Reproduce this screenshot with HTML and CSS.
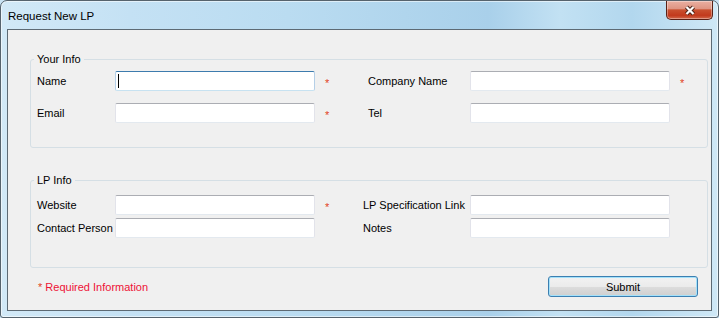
FILE: index.html
```html
<!DOCTYPE html>
<html lang="en">
<head>
    <meta charset="UTF-8">
    <title>Request New LP</title>
    <link rel="stylesheet" href="styles.css">
</head>
<body>
    <div class="window">
        <div class="titlebar">
            <span class="title">Request New LP</span>
            <button class="close" type="button">
                <svg width="14" height="11" viewBox="0 0 14 11">
                    <path d="M3.5 2 L10.5 9 M10.5 2 L3.5 9" stroke="#4a2419" stroke-width="4.2" fill="none"/>
                    <path d="M3.5 2 L10.5 9 M10.5 2 L3.5 9" stroke="#ffffff" stroke-width="2.2" fill="none"/>
                </svg>
            </button>
        </div>
        <form class="client">
            <fieldset class="group your-info">
                <legend>Your Info</legend>
                <div class="grid">
                    <label>Name</label>
                    <input type="text" class="focused">
                    <span class="req">*</span>
                    <label>Company Name</label>
                    <input type="text">
                    <span class="req">*</span>

                    <label>Email</label>
                    <input type="text">
                    <span class="req">*</span>
                    <label>Tel</label>
                    <input type="text">
                    <span></span>
                </div>
            </fieldset>

            <fieldset class="group lp-info">
                <legend>LP Info</legend>
                <div class="grid">
                    <label>Website</label>
                    <input type="text">
                    <span class="req">*</span>
                    <label>LP Specification Link</label>
                    <input type="text">
                    <span></span>

                    <label>Contact Person</label>
                    <input type="text">
                    <span></span>
                    <label>Notes</label>
                    <input type="text">
                    <span></span>
                </div>
            </fieldset>

            <div class="footer">
                <span class="note"><span class="note-star">*</span> Required Information</span>
                <button class="submit" type="button">Submit</button>
            </div>
        </form>
    </div>
</body>
</html>
```

FILE: styles.css
```css
body {
    margin: 0;
    font-family: "Liberation Sans", Arial, sans-serif;
    font-size: 11px;
    color: #000;
    background: #c9e3f4;
}

.window {
    box-sizing: border-box;
    width: 719px;
    height: 318px;
    display: flex;
    flex-direction: column;
    padding: 0 6px 6px 6px;
    border: 1px solid #56636d;
    border-radius: 7px 7px 3px 3px;
    background: linear-gradient(to right, #d2e9f7 0%, #c4e1f4 18%, #badcf1 40%, #a9d0ea 68%, #c2e1f3 78%, #b2d7ee 88%, #cfe8f6 100%);
    box-shadow: inset 0 0 0 1px rgba(255, 255, 255, 0.55);
}

.titlebar {
    height: 28px;
    display: flex;
    justify-content: space-between;
    align-items: flex-start;
    flex-shrink: 0;
}

.title {
    padding: 8px 0 0 1px;
    font-size: 11.5px;
    line-height: 14px;
    color: #000;
}

.close {
    width: 47px;
    height: 19px;
    margin-right: -1px;
    padding: 0;
    display: flex;
    align-items: center;
    justify-content: center;
    border: 1px solid #5a2116;
    border-top: none;
    border-radius: 0 0 5px 5px;
    background: linear-gradient(#eab0a2 0%, #df9583 42%, #c9502f 50%, #c23a1d 80%, #d2694b 100%);
    box-shadow: inset 0 0 0 1px rgba(255, 255, 255, 0.35);
}

.client {
    flex: 1;
    margin: 0;
    display: flex;
    flex-direction: column;
    background: #f0f0f0;
    border: 1px solid #5d6a74;
}

.group {
    min-width: 0;
    margin: 22px 3px 0 22px;
    padding: 5px 0 24px 6px;
    border: 1px solid #d5dfe5;
    border-radius: 3px;
}

.group legend {
    margin-left: -3px;
    padding: 0 3px 0 3px;
    line-height: 14px;
}

.lp-info {
    margin-top: 25px;
    padding-top: 8px;
    padding-bottom: 29px;
}

.grid {
    display: grid;
    align-items: center;
}

.your-info .grid {
    grid-template-columns: 78px 200px 53px 102px 200px 1fr;
    row-gap: 12px;
}

.lp-info .grid {
    grid-template-columns: 78px 200px 48px 107px 200px 1fr;
    row-gap: 3px;
}

label {
    white-space: nowrap;
}

input {
    box-sizing: border-box;
    height: 20px;
    margin: 0;
    padding: 0 2px;
    font: inherit;
    background: #fff;
    border: 1px solid;
    border-color: #abadb3 #e2e3ea #e3e9ef #e2e3ea;
    border-radius: 2px;
    outline: none;
}

input.focused {
    border-color: #3d7bad #b5cfe7 #c7e2f1 #b5cfe7;
    background: linear-gradient(#000, #000) no-repeat 2px 2px / 1px 14px, #fff;
}

.req {
    padding-left: 10px;
    padding-top: 3px;
    color: #e2401c;
}

.footer {
    margin-top: 8px;
    padding: 0 13px 0 30px;
    display: flex;
    justify-content: space-between;
    align-items: center;
}

.note {
    color: #ee1236;
}

.note-star {
    color: #e2401c;
}

.submit {
    width: 150px;
    height: 21px;
    padding: 0;
    font: inherit;
    color: #000;
    border: 1px solid #3c7fb1;
    border-radius: 3px;
    background: linear-gradient(#f2f2f2 0%, #ebebeb 50%, #dddddd 50%, #cfcfcf 100%);
    box-shadow: inset 0 0 0 1px #a4e1fa;
}
```
